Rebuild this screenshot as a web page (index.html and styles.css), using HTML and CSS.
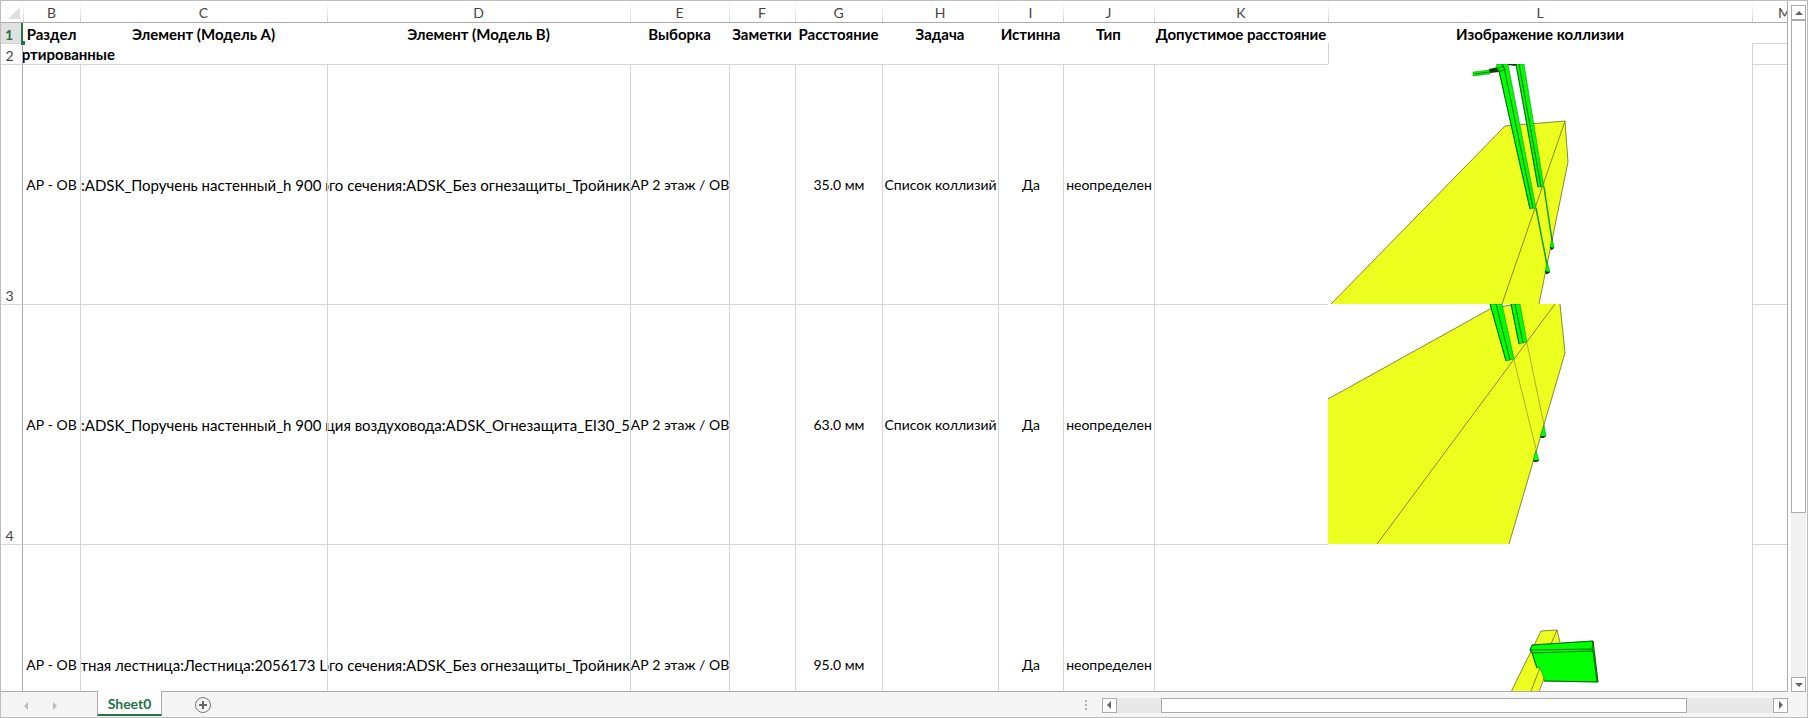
FILE: index.html
```html
<!DOCTYPE html>
<html lang="ru">
<head>
    <meta charset="UTF-8">
    <meta name="viewport" content="width=device-width, initial-scale=1.0">
    <title>Sheet0</title>
    <link rel="stylesheet" href="styles.css">
</head>
<body>
    <div class="workbook">
        <div class="view">
            <div class="sheet">
                <table class="grid">
                    <colgroup>
                        <col class="col-head"><col class="col-b"><col class="col-c"><col class="col-d">
                        <col class="col-e"><col class="col-f"><col class="col-g"><col class="col-h">
                        <col class="col-i"><col class="col-j"><col class="col-k"><col class="col-l"><col>
                    </colgroup>
                    <thead>
                        <tr class="letters">
                            <td class="corner"><svg width="12" height="12" viewBox="0 0 12 12"><path d="M12 0V12H0Z" fill="#dfdfdf"/></svg></td>
                            <th>B</th><th>C</th><th>D</th><th>E</th><th>F</th><th>G</th>
                            <th>H</th><th>I</th><th>J</th><th>K</th><th>L</th><th><div class="last">M</div></th>
                        </tr>
                    </thead>
                    <tbody>
                        <tr class="titles">
                            <th class="num active">1</th>
                            <th><div>Раздел</div></th>
                            <th><div>Элемент (Модель А)</div></th>
                            <th><div>Элемент (Модель В)</div></th>
                            <th><div>Выборка</div></th>
                            <th><div>Заметки</div></th>
                            <th><div>Расстояние</div></th>
                            <th><div>Задача</div></th>
                            <th><div>Истинна</div></th>
                            <th><div>Тип</div></th>
                            <th><div>Допустимое расстояние</div></th>
                            <th><div>Изображение коллизии</div></th>
                            <td></td>
                        </tr>
                        <tr class="group">
                            <th class="num">2</th>
                            <th colspan="10"><div class="group-name">ртированные</div></th>
                            <td></td>
                            <td></td>
                        </tr>
                        <tr class="item">
                            <th class="num">3</th>
                            <td><div>АР - ОВ</div></td>
                            <td class="long"><div>:ADSK_Поручень настенный_h 900 и</div></td>
                            <td class="long tail"><div>ого сечения:ADSK_Без огнезащиты_Тройник</div></td>
                            <td><div>АР 2 этаж / ОВ</div></td>
                            <td></td>
                            <td><div>35.0 мм</div></td>
                            <td><div>Список коллизий</div></td>
                            <td><div>Да</div></td>
                            <td><div>неопределен</div></td>
                            <td></td>
                            <td class="shot">
                                <svg width="424" height="240" viewBox="0 0 424 240">
                                    <path class="wall" d="M3 240L177 62L237 57L240 98L211 240Z"/>
                                    <path class="edge-line" d="M3 240L177 62L237 57L240 98L211 240M237 57L174 240"/>
                                    <path class="pipe" d="M145 8L162 6V10L145 12Z"/>
                                    <path class="dark" d="M161 5L170 3L171 8L162 9ZM180 0H188V2L180 1Z"/>
                                    <path class="pipe" d="M169 0H180L208 144L202 145L171 7L168 3Z"/>
                                    <path class="pipe" d="M188 0H196L216 123H210Z"/>
                                    <path class="seam" d="M147 10L161 8M174 0L177 6L171 7M176 3L205 144M171 7L202 145M191 0L213 123M188 0L210 123M168 5L176 2"/>
                                    <path class="thin" d="M208 144L220 206M216 123L225 183"/>
                                    <path class="pipe" d="M219 197L222 208L217 209ZM224 173L226 184L222 184Z"/>
                                    <path class="dark" d="M217 207L222 208L220 210H218ZM222 183L226 184L224 186H223Z"/>
                                </svg>
                            </td>
                            <td></td>
                        </tr>
                        <tr class="item">
                            <th class="num">4</th>
                            <td><div>АР - ОВ</div></td>
                            <td class="long"><div>:ADSK_Поручень настенный_h 900 и</div></td>
                            <td class="long tail"><div>яция воздуховода:ADSK_Огнезащита_EI30_5</div></td>
                            <td><div>АР 2 этаж / ОВ</div></td>
                            <td></td>
                            <td><div>63.0 мм</div></td>
                            <td><div>Список коллизий</div></td>
                            <td><div>Да</div></td>
                            <td><div>неопределен</div></td>
                            <td></td>
                            <td class="shot">
                                <svg width="424" height="240" viewBox="0 0 424 240">
                                    <path class="wall" d="M0 95L162 5L185 0H232L237 49L181 240H0Z"/>
                                    <path class="edge-line" d="M0 95L162 5L183 1M232 0L237 49L181 240M227 0L49 240"/>
                                    <path class="faint" d="M186 56L208 145M199 39L216 121"/>
                                    <path class="pipe" d="M162 0H174L186 55L178 57Z"/>
                                    <path class="pipe" d="M183 0H192L199 38L191 40Z"/>
                                    <path class="seam" d="M168 0L182 56M162 0L178 57M187 0L195 39M183 0L191 40"/>
                                    <path class="pipe" d="M208 146L211 157L205 157ZM216 121L218 132L212 133Z"/>
                                    <path class="dark" d="M205 156L211 156L209 158H206ZM212 132L218 132L216 134H213Z"/>
                                </svg>
                            </td>
                            <td></td>
                        </tr>
                        <tr class="item">
                            <th class="num"></th>
                            <td><div>АР - ОВ</div></td>
                            <td class="long tail"><div>итная лестница:Лестница:2056173 L</div></td>
                            <td class="long tail"><div>ого сечения:ADSK_Без огнезащиты_Тройник</div></td>
                            <td><div>АР 2 этаж / ОВ</div></td>
                            <td></td>
                            <td><div>95.0 мм</div></td>
                            <td></td>
                            <td><div>Да</div></td>
                            <td><div>неопределен</div></td>
                            <td></td>
                            <td class="shot">
                                <svg width="424" height="240" viewBox="0 0 424 240">
                                    <path class="wall" d="M213 87L229 86L232 98L216 134L174 240H138L183 148Z"/>
                                    <path class="edge-line" d="M138 240L183 148L213 87L229 86L232 98M229 86L223 100M212 124L203 147L166 240M216 134L211 148L174 240"/>
                                    <path class="pipe" d="M204 101L265 97L270 138L216 137V134L212 124L209 124L204 109L202 106Z"/>
                                    <path class="seam" d="M209 124L204 109L202 106L204 101L265 97L270 138L216 137M202 106L264 105L265 97M204 109L265 107L269 138M264 105L265 107"/>
                                </svg>
                            </td>
                            <td></td>
                        </tr>
                    </tbody>
                </table>
            </div>
            <div class="scroll-y">
                <button class="arrow" aria-label="Вверх"><svg width="8" height="4" viewBox="0 0 8 4"><path d="M4 0L8 4H0Z"/></svg></button>
                <div class="track-y"><div class="thumb-y"></div></div>
                <button class="arrow" aria-label="Вниз"><svg width="8" height="4" viewBox="0 0 8 4"><path d="M0 0H8L4 4Z"/></svg></button>
            </div>
        </div>
        <div class="bottom">
            <div class="tabs">
                <button class="nav" aria-label="Предыдущий лист"><svg width="4" height="8" viewBox="0 0 4 8"><path d="M4 0V8L0 4Z"/></svg></button>
                <button class="nav" aria-label="Следующий лист"><svg width="4" height="8" viewBox="0 0 4 8"><path d="M0 0L4 4L0 8Z"/></svg></button>
                <button class="tab">Sheet0</button>
                <button class="add" aria-label="Новый лист">
                    <svg width="18" height="18" viewBox="0 0 18 18"><circle cx="9" cy="9" r="7.5" fill="none" stroke="#777"/><path d="M9 5V13M5 9H13" stroke="#666" stroke-width="2"/></svg>
                </button>
            </div>
            <div class="scroll-x">
                <svg class="grip" width="2" height="10" viewBox="0 0 2 10"><path d="M0 0H2V2H0ZM0 4H2V6H0ZM0 8H2V10H0Z" fill="#b0b0b0"/></svg>
                <button class="arrow" aria-label="Влево"><svg width="4" height="8" viewBox="0 0 4 8"><path d="M4 0V8L0 4Z"/></svg></button>
                <div class="track-x"><div class="thumb-x"></div></div>
                <button class="arrow" aria-label="Вправо"><svg width="4" height="8" viewBox="0 0 4 8"><path d="M0 0L4 4L0 8Z"/></svg></button>
            </div>
        </div>
    </div>
</body>
</html>
```
FILE: styles.css
```css
* {
    box-sizing: border-box;
}

body {
    margin: 0;
    font-family: Lato, "Open Sans", sans-serif;
    font-size: 14px;
    line-height: 18px;
    color: #000;
    background: #fff;
}

button {
    padding: 0;
    margin: 0;
    border: none;
    background: none;
    font: inherit;
}

.workbook {
    display: flex;
    flex-direction: column;
    height: 100vh;
    border: 1px solid #bdbdbd;
}

.view {
    display: flex;
    flex: 1;
    min-height: 0;
}

.sheet {
    flex: 1;
    min-width: 0;
    overflow: hidden;
    border-right: 1px solid #ababab;
    border-bottom: 1px solid #ababab;
}

/* grid */
.grid {
    width: 100%;
    table-layout: fixed;
    border-collapse: separate;
    border-spacing: 0;
}

.col-head { width: 22px; }
.col-b { width: 57px; }
.col-c { width: 247px; }
.col-d { width: 303px; }
.col-e { width: 99px; }
.col-f { width: 66px; }
.col-g { width: 87px; }
.col-h { width: 116px; }
.col-i { width: 65px; }
.col-j { width: 91px; }
.col-k { width: 174px; }
.col-l { width: 424px; }

.grid th,
.grid td {
    padding: 0;
    white-space: nowrap;
}

.grid th div,
.grid td div {
    display: flex;
    justify-content: center;
    overflow: hidden;
}

.letters th,
.letters td {
    height: 21px;
    border-bottom: 1px solid #ababab;
    font-weight: normal;
    color: #444;
}

.grid .letters th {
    height: 22px;
    padding-top: 3px;
    background: linear-gradient(#fff, #d4d4d4) left / 1px 100% no-repeat;
}

.letters .corner {
    text-align: right;
    line-height: 0;
    padding: 2px 3px 0 0;
}

.grid .last {
    justify-content: flex-end;
    margin-right: -4px;
}

.titles th,
.titles td {
    height: 20px;
    font-size: 15px;
}

.group th,
.group td {
    height: 21px;
    font-size: 15px;
}

.grid .titles div,
.grid .group div {
    padding-top: 1px;
}

.group td {
    border-left: 1px solid #d4d4d4;
}

.group td:last-child {
    border-top: 1px solid #d4d4d4;
}

.grid .group-name {
    width: 92px;
    justify-content: flex-end;
}

.item th,
.item td {
    height: 240px;
}

.item td {
    border-top: 1px solid #d4d4d4;
    border-left: 1px solid #d4d4d4;
}

.item .num + td {
    border-left: none;
}

.item .long {
    font-size: 15px;
}

.item .long div {
    justify-content: flex-start;
}

.item .tail div {
    justify-content: flex-end;
}

.item .shot {
    border: none;
    line-height: 0;
    vertical-align: top;
}

.grid .num {
    border-right: 1px solid #ababab;
    border-top: 1px solid #d4d4d4;
    padding-right: 4px;
    vertical-align: bottom;
    text-align: center;
    font-size: 14px;
    line-height: 16px;
    font-weight: normal;
    color: #444;
}

.grid .active {
    position: relative;
    border-top: none;
    border-right: 2px solid #217346;
    background: #e1e1e1;
    color: #217346;
    font-weight: bold;
}

/* fill handle of the selected cell */
.active::after {
    content: "";
    position: absolute;
    right: -4px;
    bottom: -2px;
    width: 4px;
    height: 4px;
    background: #217346;
}

/* collision pictures */
.wall { fill: #ecff1f; }
.pipe { fill: #00ff00; stroke: #087a08; stroke-width: 0.5; }
.dark { fill: #043c08; }
.edge-line { fill: none; stroke: #6b6b24; stroke-width: 0.8; }
.seam { fill: none; stroke: #045c08; stroke-width: 0.9; }
.thin { fill: none; stroke: #08a010; stroke-width: 1.5; }
.faint { fill: none; stroke: #a8b31a; stroke-width: 1; }

/* scroll bars */
.scroll-y {
    display: flex;
    flex-direction: column;
    width: 19px;
    padding: 4px 1px 0 3px;
}

.arrow {
    display: flex;
    align-items: center;
    justify-content: center;
    flex: none;
    width: 15px;
    height: 15px;
    border: 1px solid #ababab;
    background: #fff;
    fill: #666;
}

.track-y {
    flex: 1;
    background: #f1f1f1;
}

.thumb-y {
    height: 75%;
    border: 1px solid #ababab;
    background: #fff;
}

.bottom {
    display: flex;
    justify-content: space-between;
    height: 25px;
    background: #f5f5f5;
}

.tabs {
    display: flex;
    align-items: center;
    padding-left: 10px;
}

.nav {
    width: 29px;
    height: 24px;
    fill: #bbb;
}

.tab {
    position: relative;
    align-self: flex-start;
    width: 65px;
    height: 25px;
    padding-top: 3px;
    margin: -1px 31px 0 28px;
    border: 1px solid #ababab;
    border-top: none;
    border-bottom: 2px solid #217346;
    background: #fff;
    color: #217346;
    font-weight: bold;
}

.add {
    width: 20px;
    height: 18px;
    line-height: 0;
}

.scroll-x {
    display: flex;
    align-items: center;
    width: 40%;
    padding: 0 19px 4px 0;
    margin-top: 5px;
}

.grip {
    flex: none;
    margin-right: 15px;
}

.track-x {
    display: flex;
    flex: 1;
    height: 15px;
    padding-left: 44px;
    background: #e8e8e8;
}

.thumb-x {
    width: 86%;
    border: 1px solid #ababab;
    background: #fff;
}
```
